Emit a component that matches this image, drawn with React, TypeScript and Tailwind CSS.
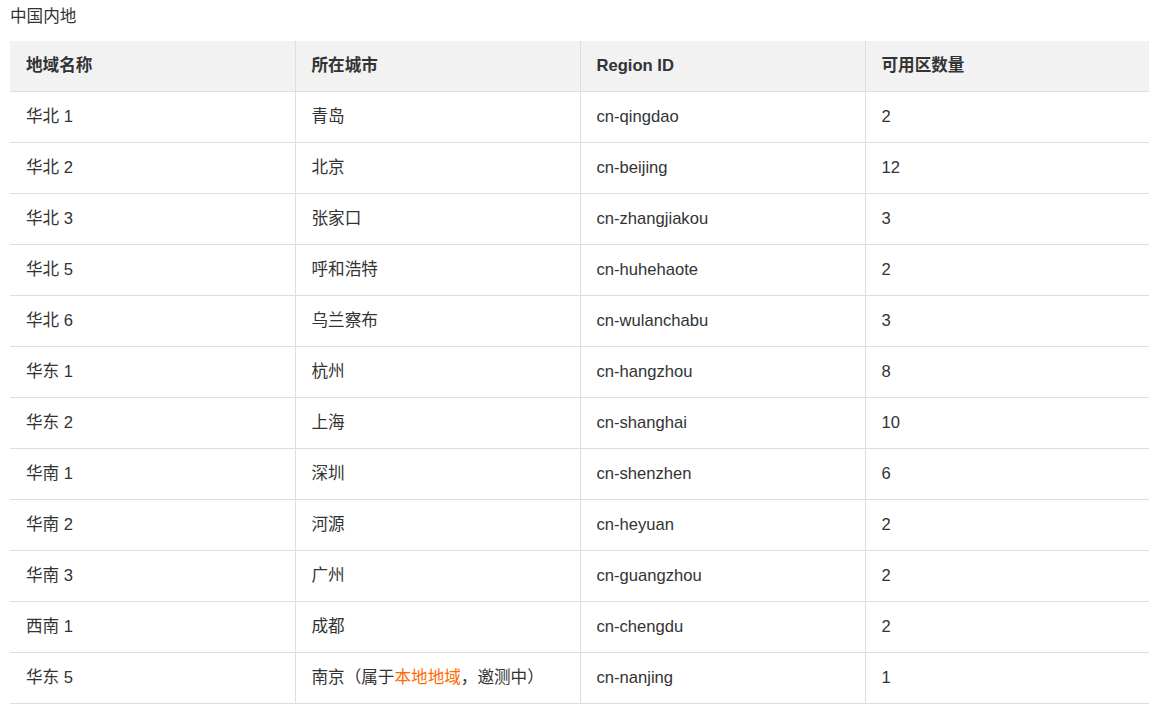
const rows: [string, React.ReactNode, string, string][] = [
  ['华北 1', '青岛', 'cn-qingdao', '2'],
  ['华北 2', '北京', 'cn-beijing', '12'],
  ['华北 3', '张家口', 'cn-zhangjiakou', '3'],
  ['华北 5', '呼和浩特', 'cn-huhehaote', '2'],
  ['华北 6', '乌兰察布', 'cn-wulanchabu', '3'],
  ['华东 1', '杭州', 'cn-hangzhou', '8'],
  ['华东 2', '上海', 'cn-shanghai', '10'],
  ['华南 1', '深圳', 'cn-shenzhen', '6'],
  ['华南 2', '河源', 'cn-heyuan', '2'],
  ['华南 3', '广州', 'cn-guangzhou', '2'],
  ['西南 1', '成都', 'cn-chengdu', '2'],
  [
    '华东 5',
    <>
      南京（属于<span className="text-[#ff6a00]">本地地域</span>，邀测中）
    </>,
    'cn-nanjing',
    '1',
  ],
];

export default function App() {
  return (
    <div
      className="bg-white text-[#333] min-h-[715px] px-[10px]"
      style={{ fontFamily: '"Liberation Sans", Arial, "Noto Sans CJK SC", sans-serif' }}
    >
      <p className="text-[16.6px] leading-[30px] pt-[2px]">中国内地</p>
      <table className="w-[1139px] mt-[9px] border-collapse table-fixed text-[16.6px]">
        <thead>
          <tr className="bg-[#f2f2f2] h-[50px] border-b border-[#dedede]">
            <th className="w-[285px] text-left font-bold px-4 pt-[2px] border-r border-[#dedede]">地域名称</th>
            <th className="w-[285px] text-left font-bold px-4 pt-[2px] border-r border-[#dedede]">所在城市</th>
            <th className="w-[285px] text-left font-bold px-4 pt-[2px] border-r border-[#dedede]">Region ID</th>
            <th className="text-left font-bold px-4 pt-[2px]">可用区数量</th>
          </tr>
        </thead>
        <tbody>
          {rows.map((r) => (
            <tr key={r[2]} className="h-[51px] border-b border-[#dedede]">
              <td className="px-4 pt-[2px] border-r border-[#dedede]">{r[0]}</td>
              <td className="px-4 pt-[2px] border-r border-[#dedede]">{r[1]}</td>
              <td className="px-4 pt-[2px] border-r border-[#dedede]">{r[2]}</td>
              <td className="px-4 pt-[2px]">{r[3]}</td>
            </tr>
          ))}
        </tbody>
      </table>
    </div>
  );
}
